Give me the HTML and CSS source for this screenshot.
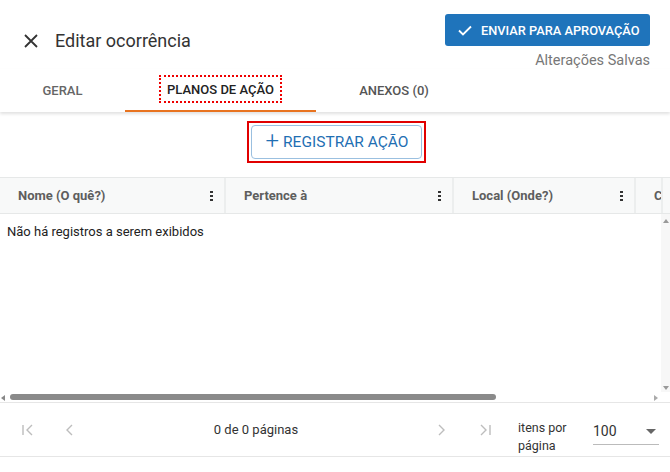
FILE: index.html
```html
<!DOCTYPE html>
<html lang="pt">
<head>
<meta charset="utf-8">
<link rel="stylesheet" href="styles.css">
</head>
<body>
<div class="page">
  <header class="top">
    <div class="title">
      <svg class="close" width="14" height="14" viewBox="0 0 14 14"><path d="M1 1L13 13M13 1L1 13" stroke="#333" stroke-width="1.8" fill="none"/></svg>
      <span>Editar ocorrência</span>
    </div>
    <div class="actions">
      <button class="primary">
        <svg width="14" height="11" viewBox="0 0 14 11"><path d="M1 5.5L5 9.5L13 1.5" stroke="#fff" stroke-width="1.8" fill="none"/></svg>
        ENVIAR PARA APROVAÇÃO
      </button>
      <div class="saved">Alterações Salvas</div>
    </div>
  </header>
  <nav class="tabs">
    <div class="tab t1">GERAL</div>
    <div class="tab t2 active"><span class="focus">PLANOS DE AÇÃO</span></div>
    <div class="tab t3">ANEXOS (0)</div>
  </nav>
  <div class="toolbar">
    <div class="focusbox">
      <button class="outlined"><span class="plus">+</span>REGISTRAR AÇÃO</button>
    </div>
  </div>
  <div class="grid">
    <div class="ghead">
      <div class="hc c1"><span>Nome (O quê?)</span><i class="kebab"></i></div>
      <div class="hc c2"><span>Pertence à</span><i class="kebab"></i></div>
      <div class="hc c3"><span>Local (Onde?)</span><i class="kebab"></i></div>
      <div class="hc c4"><span>C</span></div>
      <div class="hc c5"></div>
    </div>
    <div class="gbody">
      <div class="empty">Não há registros a serem exibidos</div>
      <div class="vscroll">
        <span class="arr up"></span>
        <span class="arr down"></span>
      </div>
    </div>
    <div class="hscroll">
      <span class="arr left"></span>
      <div class="thumb"></div>
      <span class="arr right"></span>
    </div>
  </div>
  <div class="pager">
    <div class="nav first"><svg width="14" height="14" viewBox="0 0 14 14"><path d="M2 2V12M11 2L6 7L11 12" stroke="#bdbdbd" stroke-width="1.4" fill="none"/></svg></div>
    <div class="nav prev"><svg width="14" height="14" viewBox="0 0 14 14"><path d="M9 2L4 7L9 12" stroke="#bdbdbd" stroke-width="1.4" fill="none"/></svg></div>
    <div class="pages">0 de 0 páginas</div>
    <div class="nav next"><svg width="14" height="14" viewBox="0 0 14 14"><path d="M5 2L10 7L5 12" stroke="#bdbdbd" stroke-width="1.4" fill="none"/></svg></div>
    <div class="nav last"><svg width="14" height="14" viewBox="0 0 14 14"><path d="M3 2L8 7L3 12M12 2V12" stroke="#bdbdbd" stroke-width="1.4" fill="none"/></svg></div>
    <div class="per">itens por<br>página</div>
    <div class="select"><span>100</span><i class="caret"></i></div>
  </div>
</div>
</body>
</html>
```

FILE: styles.css
```css
* { box-sizing: border-box; }
html, body { margin: 0; padding: 0; background: #fff; }
body { font-family: Roboto, "Liberation Sans", sans-serif; color: #333; width: 670px; height: 472px; overflow: hidden; }
.page { width: 670px; }

.top { display: flex; justify-content: space-between; align-items: flex-start; padding: 14px 20px 0 24px; height: 69px; }
.title { display: flex; align-items: center; gap: 17px; margin-top: 16px; font-size: 18px; color: #333; }
.close { display: block; }
.actions { display: flex; flex-direction: column; align-items: flex-end; }
.primary { display: flex; align-items: center; gap: 9px; width: 205px; height: 32px; padding: 0 0 0 13px; border: 0; border-radius: 3px; background: #1f74bb; color: #fff; font-family: Roboto, sans-serif; font-size: 12.8px; font-weight: 500; white-space: nowrap; cursor: pointer; }
.saved { margin-top: 6px; font-size: 14.5px; color: #777; line-height: 17px; }

.tabs { display: flex; height: 43px; box-shadow: 0 2px 3px rgba(0,0,0,0.12); }
.tab { display: flex; align-items: center; justify-content: center; font-size: 13px; font-weight: 500; color: #666; height: 43px; border-bottom: 2px solid transparent; padding-top: 2px; flex-shrink: 0; }
.t1 { width: 125px; }
.t2 { width: 191px; }
.t3 { width: 156px; color: #555; }
.tab.active { border-bottom-color: #e8731f; color: #222; }
.focus { outline: 2px dotted #e00; outline-offset: 4px; padding: 1px 2px 0 2px; line-height: 15px; margin-top: -3px; }

.toolbar { display: flex; justify-content: center; padding: 9px 0 14px 2px; }
.focusbox { border: 2px solid #e10000; padding: 2px; }
.outlined { display: flex; align-items: center; gap: 4px; width: 171px; height: 34px; padding: 0 0 0 14px; border: 1px solid #9bc0e0; border-radius: 4px; background: #fff; color: #1f6fb3; font-family: Roboto, sans-serif; font-size: 15.5px; font-weight: 400; }
.plus { font-size: 24px; font-weight: 300; line-height: 20px; margin-top: -2px; }

.grid { position: relative; }
.ghead { display: flex; height: 37px; background: #f8f9f9; border-top: 1px solid #e6e8e8; border-bottom: 1px solid #e6e8e8; }
.hc { display: flex; align-items: center; justify-content: space-between; height: 100%; padding: 0 11px 0 18px; font-size: 13px; font-weight: 700; color: #5e5e5e; border-right: 2px solid #eceeee; flex-shrink: 0; }
.c1 { width: 226px; }
.c2 { width: 228px; }
.c3 { width: 182px; }
.c4 { width: 27px; padding: 0 0 0 18px; overflow: hidden; }
.c5 { flex: 1; border-right: 0; }
.kebab { width: 3px; height: 11px; background: radial-gradient(circle, #333 1.2px, transparent 1.5px) 0 0 / 3px 4px repeat-y; }

.gbody { position: relative; height: 178px; }
.empty { padding: 10px 7px; font-size: 13px; color: #222; }
.vscroll { position: absolute; right: 0; top: 0; width: 9px; height: 100%; background: #f7f7f7; }
.arr { position: absolute; width: 0; height: 0; }
.up { top: 5px; left: 2px; border-left: 3px solid transparent; border-right: 3px solid transparent; border-bottom: 4px solid #999; }
.down { bottom: 2px; left: 2px; border-left: 3px solid transparent; border-right: 3px solid transparent; border-top: 4px solid #999; }
.hscroll { position: relative; height: 11px; background: #fff; border-bottom: 1px solid #e6e6e6; }
.left { left: 1px; top: 3px; border-top: 3px solid transparent; border-bottom: 3px solid transparent; border-right: 4px solid #888; }
.right { left: 654px; top: 3px; border-top: 3px solid transparent; border-bottom: 3px solid transparent; border-left: 4px solid #aaa; }
.thumb { position: absolute; left: 10px; top: 2px; width: 486px; height: 6px; border-radius: 3px; background: #8a8a8a; }

.pager { display: flex; align-items: center; height: 54px; border-bottom: 1px solid #e6e6e6; font-size: 13px; color: #333; }
.nav { display: flex; align-items: center; justify-content: center; width: 14px; flex-shrink: 0; }
.first { margin-left: 21px; }
.prev { margin-left: 28px; }
.pages { width: 230px; margin-left: 64px; text-align: center; margin-right: 0; flex-shrink: 0; }
.next { margin-left: 63px; }
.last { margin-left: 30px; }
.per { align-self: stretch; margin-left: 26px; width: 66px; line-height: 18px; padding-top: 16px; font-size: 12.5px; color: #333; flex-shrink: 0; overflow: hidden; }
.select { display: flex; align-items: center; justify-content: space-between; margin-left: 9px; width: 66px; height: 26px; border-bottom: 1px solid #bbb; font-size: 14px; color: #333; margin-top: 4px; flex-shrink: 0; }
.caret { width: 0; height: 0; border-left: 5px solid transparent; border-right: 5px solid transparent; border-top: 5px solid #666; margin-right: 3px; }
```
